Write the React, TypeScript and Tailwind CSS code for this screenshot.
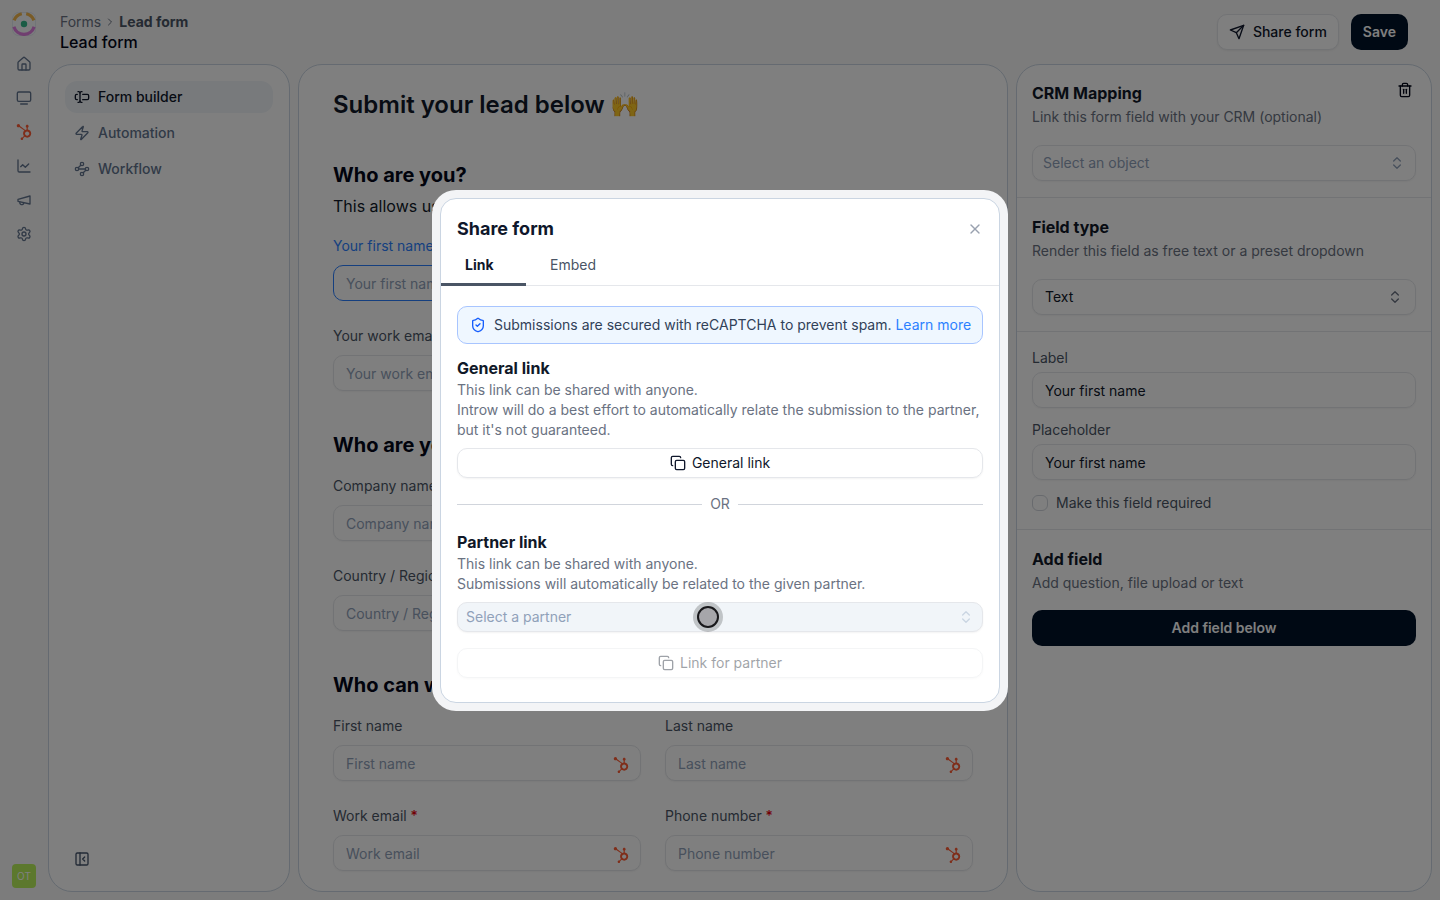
import type { ReactNode } from 'react';
import {
  ChartLine,
  ChevronRight,
  ChevronsUpDown,
  Copy,
  House,
  PanelLeftClose,
  Settings,
  ShieldCheck,
  TextCursorInput,
  Trash2,
  TvMinimal,
  Waypoints,
  X,
  Zap,
} from 'lucide-react';
import { FaHubspot } from 'react-icons/fa';

function Logo() {
  return (
    <svg viewBox="0 0 24 24" className="size-6" aria-hidden="true">
      <rect x="0.5" y="0.5" width="23" height="23" rx="6" fill="#f8fafc" stroke="#e2e8f0" />
      <g fill="none" strokeWidth="3.2">
        <path d="M2.1 8.4A10.4 10.4 0 0 1 9.8 1.8" stroke="#f2b64c" />
        <path d="M14.2 1.8a10.4 10.4 0 0 1 7.7 6.6" stroke="#f2b64c" />
        <path d="M1.9 14.8a10.5 10.5 0 0 0 20.2 0" stroke="#e07fe0" />
      </g>
      <circle cx="12" cy="12" r="3.2" fill="#34b98a" />
    </svg>
  );
}

function MegaphoneIcon() {
  return (
    <svg viewBox="0 0 24 24" className="size-4" fill="none" stroke="currentColor" strokeWidth="2" strokeLinecap="round" strokeLinejoin="round" aria-hidden="true">
      <path d="m3 11 18-5v12L3 14v-3z" />
      <path d="M11.6 16.8a3 3 0 1 1-5.8-1.6" />
    </svg>
  );
}

function SendIcon() {
  return (
    <svg viewBox="0 0 24 24" className="size-4" fill="none" stroke="currentColor" strokeWidth="2" strokeLinecap="round" strokeLinejoin="round" aria-hidden="true">
      <path d="m22 2-7 20-4-9-9-4Z" />
      <path d="M22 2 11 13" />
    </svg>
  );
}

const rail: { label: string; icon: ReactNode }[] = [
  { label: 'Home', icon: <House className="size-4" /> },
  { label: 'Portal', icon: <TvMinimal className="size-4" /> },
  { label: 'HubSpot', icon: <FaHubspot className="size-4 text-[#ff5c35]" /> },
  { label: 'Reports', icon: <ChartLine className="size-4" /> },
  { label: 'Announcements', icon: <MegaphoneIcon /> },
  { label: 'Settings', icon: <Settings className="size-4" /> },
];

function Rail() {
  return (
    <nav aria-label="Main" className="flex w-12 shrink-0 flex-col items-center py-3 text-slate-500">
      <Logo />
      <div className="mt-5 flex flex-col gap-[18px]">
        {rail.map((item) => (
          <a key={item.label} href="#" aria-label={item.label}>
            {item.icon}
          </a>
        ))}
      </div>
      <button type="button" className="mt-auto size-6 rounded bg-[#b8f15a] text-[10px] text-white">
        OT
      </button>
    </nav>
  );
}

function NavItem({ icon, label, active = false }: { icon: ReactNode; label: string; active?: boolean }) {
  return (
    <a
      href="#"
      className={
        active
          ? 'flex h-8 items-center gap-2 rounded-xl border border-transparent bg-slate-100 px-2 font-medium text-slate-900'
          : 'flex h-8 items-center gap-2 rounded-xl border border-transparent px-2 font-medium text-slate-500'
      }
    >
      {icon}
      {label}
    </a>
  );
}

interface FieldProps {
  id: string;
  label: string;
  required?: boolean;
  active?: boolean;
  linked?: boolean;
}

function PreviewField({ id, label, required, active, linked }: FieldProps) {
  return (
    <div className="flex flex-col gap-2">
      <label htmlFor={id} className={active ? 'leading-[22px] text-blue-500' : 'leading-[22px] text-gray-600'}>
        {label}
        {required && <span className="font-medium text-red-600"> *</span>}
      </label>
      <div className="relative">
        <input
          id={id}
          placeholder={label}
          className={
            active
              ? 'block h-9 w-full rounded-[10px] border border-blue-500 bg-white px-3 placeholder:text-slate-400'
              : 'block h-9 w-full rounded-[10px] border border-gray-200 bg-white px-3 shadow-xs placeholder:text-slate-400'
          }
        />
        {linked && <FaHubspot className="absolute top-3 right-3 size-4 text-[#ff5c35]" />}
      </div>
    </div>
  );
}

function Preview() {
  return (
    <main className="min-w-0 flex-1 overflow-hidden rounded-3xl border border-slate-300 bg-white">
      <div className="mx-auto flex max-w-[640px] flex-col gap-10 pt-6">
        <h1 className="text-2xl leading-8 font-semibold text-gray-900">Submit your lead below 🙌</h1>
        <section>
          <h2 className="text-xl font-bold">Who are you?</h2>
          <p className="mt-1 text-base leading-[26px] text-gray-900">This allows us to get in touch with you</p>
          <div className="mt-4 flex flex-col gap-6">
            <PreviewField id="your-first-name" label="Your first name" active />
            <PreviewField id="your-work-email" label="Your work email" />
          </div>
        </section>
        <section>
          <h2 className="text-xl font-bold">Who are you referring?</h2>
          <div className="mt-4 flex flex-col gap-6">
            <PreviewField id="company-name" label="Company name" linked />
            <PreviewField id="country" label="Country / Region" linked />
          </div>
        </section>
        <section>
          <h2 className="text-xl font-bold">Who can we contact?</h2>
          <div className="mt-4 grid grid-cols-2 gap-6">
            <PreviewField id="first-name" label="First name" linked />
            <PreviewField id="last-name" label="Last name" linked />
            <PreviewField id="work-email" label="Work email" required linked />
            <PreviewField id="phone-number" label="Phone number" required linked />
          </div>
        </section>
      </div>
    </main>
  );
}

function Inspector() {
  return (
    <aside className="w-[416px] shrink-0 overflow-hidden rounded-3xl border border-slate-300 bg-white">
      <section className="px-[15px] py-4">
        <div className="flex items-start justify-between">
          <h2 className="text-base font-bold text-gray-900">CRM Mapping</h2>
          <button type="button" aria-label="Delete field" className="mr-[3px] pt-px">
            <Trash2 className="size-4" />
          </button>
        </div>
        <p className="leading-6 text-gray-500">Link this form field with your CRM (optional)</p>
        <div className="relative mt-4">
          <select aria-label="CRM object" className="block h-9 w-full appearance-none rounded-[10px] border border-gray-200 bg-white px-2.5 text-slate-400 shadow-xs">
            <option>Select an object</option>
          </select>
          <ChevronsUpDown className="pointer-events-none absolute top-2.5 right-[11px] size-4 text-slate-400" />
        </div>
      </section>
      <section className="border-t border-gray-200 px-[15px] pt-[17px] pb-4">
        <h2 className="text-base font-bold text-gray-900">Field type</h2>
        <p className="leading-6 text-gray-500">Render this field as free text or a preset dropdown</p>
        <div className="relative mt-4">
          <select aria-label="Field type" className="block h-9 w-full appearance-none rounded-[10px] border border-gray-200 bg-white px-3 text-gray-900 shadow-xs">
            <option>Text</option>
          </select>
          <ChevronsUpDown className="pointer-events-none absolute top-2.5 right-[13px] size-4 text-gray-500" />
        </div>
      </section>
      <section className="flex flex-col gap-3 border-t border-gray-200 px-[15px] pt-4 pb-[15px] text-gray-600">
        <div className="flex flex-col gap-1">
          <label htmlFor="field-label">Label</label>
          <input id="field-label" defaultValue="Your first name" className="h-9 rounded-[10px] border border-gray-200 px-3 text-slate-900 shadow-xs" />
        </div>
        <div className="flex flex-col gap-1">
          <label htmlFor="field-placeholder">Placeholder</label>
          <input id="field-placeholder" defaultValue="Your first name" className="h-9 rounded-[10px] border border-gray-200 px-3 text-slate-900 shadow-xs" />
        </div>
        <label className="flex h-[22px] items-center gap-2">
          <input type="checkbox" className="size-4 appearance-none rounded-md border border-gray-300" />
          Make this field required
        </label>
      </section>
      <section className="border-t border-gray-200 px-[15px] pt-[17px]">
        <h2 className="text-base font-bold text-gray-900">Add field</h2>
        <p className="leading-6 text-gray-500">Add question, file upload or text</p>
        <button type="button" className="mt-[15px] h-9 w-full rounded-[10px] bg-[#001229] font-semibold text-white">
          Add field below
        </button>
      </section>
    </aside>
  );
}

function ShareDialog() {
  return (
    <div className="fixed inset-0 grid place-items-center bg-black/50 pt-px">
      <div role="dialog" aria-modal="true" aria-labelledby="share-title" className="w-[576px] rounded-3xl bg-gray-100 p-2">
        <div className="rounded-2xl border border-slate-300 bg-white">
          <div className="flex items-center justify-between px-4 pt-4">
            <h2 id="share-title" className="text-lg font-bold text-slate-900">
              Share form
            </h2>
            <button type="button" aria-label="Close" className="text-gray-400">
              <X className="size-4" />
            </button>
          </div>
          <div role="tablist" className="mt-3 flex border-b border-gray-200">
            <button type="button" role="tab" aria-selected="true" className="-mb-px w-[85px] border-b-[3px] border-gray-600 pb-2 pl-6 text-left font-bold text-slate-900">
              Link
            </button>
            <button type="button" role="tab" aria-selected="false" className="-mb-px border-b-[3px] border-transparent px-6 pb-2 text-gray-600">
              Embed
            </button>
          </div>
          <div className="px-4 pt-5 pb-6">
            <div className="flex h-[38px] items-center gap-2 rounded-[10px] border border-[#a8c5ff] bg-[#eff7ff] px-3 text-slate-700">
              <ShieldCheck className="size-4 shrink-0 text-blue-600" />
              <p className="whitespace-nowrap">
                Submissions are secured with reCAPTCHA to prevent spam.{' '}
                <a href="#" className="text-blue-500">
                  Learn more
                </a>
              </p>
            </div>
            <h3 className="mt-3 text-base font-bold text-gray-900">General link</h3>
            <p className="text-gray-500">
              This link can be shared with anyone.
              <br />
              Introw will do a best effort to automatically relate the submission to the partner, but it's not guaranteed.
            </p>
            <button type="button" className="mt-2 flex h-[30px] w-full items-center justify-center gap-1.5 rounded-[10px] border border-gray-200 text-slate-900 shadow-xs">
              <Copy className="size-4" />
              General link
            </button>
            <div className="my-4 flex items-center gap-2 text-gray-500">
              <span className="h-px flex-1 bg-gray-300" />
              OR
              <span className="h-px flex-1 bg-gray-300" />
            </div>
            <h3 className="text-base font-bold text-gray-900">Partner link</h3>
            <p className="text-gray-500">
              This link can be shared with anyone.
              <br />
              Submissions will automatically be related to the given partner.
            </p>
            <div className="relative mt-2">
              <select aria-label="Partner" className="block h-[30px] w-full appearance-none rounded-[10px] border border-gray-200 bg-slate-100 px-2 text-slate-400 shadow-xs">
                <option>Select a partner</option>
              </select>
              <ChevronsUpDown className="pointer-events-none absolute top-[7px] right-[9px] size-4 text-slate-300" />
              <svg viewBox="0 0 30 30" className="pointer-events-none absolute top-0 left-[236px] size-[30px]" aria-hidden="true">
                <circle cx="15" cy="15" r="15" fill="#000000" fillOpacity="0.2" />
                <circle cx="15" cy="15" r="10" fill="#a6a6aa" stroke="#18181b" strokeWidth="2" />
              </svg>
            </div>
            <button type="button" disabled className="mt-4 flex h-[30px] w-full items-center justify-center gap-1.5 rounded-[10px] border border-gray-200 text-gray-900 opacity-40 shadow-xs">
              <Copy className="size-4" />
              Link for partner
            </button>
          </div>
        </div>
      </div>
    </div>
  );
}

export default function App() {
  return (
    <div className="flex h-screen bg-[#f8f8f8] font-['Inter','Noto_Color_Emoji',sans-serif] text-sm text-slate-950">
      <Rail />
      <div className="flex min-w-0 flex-1 flex-col pr-2 pb-2">
        <header className="flex h-16 shrink-0 items-center justify-between pr-6 pl-3">
          <div className="pb-px">
            <nav aria-label="Breadcrumb" className="flex items-center gap-[3px] text-gray-500">
              <a href="#">Forms</a>
              <ChevronRight className="size-3" />
              <span className="font-bold text-gray-600">Lead form</span>
            </nav>
            <p className="text-base leading-5 font-medium">Lead form</p>
          </div>
          <div className="flex gap-3">
            <button type="button" className="flex h-9 items-center gap-2 rounded-[10px] border border-gray-200 bg-white px-[11px] font-medium text-slate-900 shadow-xs">
              <SendIcon />
              Share form
            </button>
            <button type="button" className="h-9 rounded-[10px] bg-[#001229] px-3 font-semibold text-white">
              Save
            </button>
          </div>
        </header>
        <div className="flex min-h-0 flex-1 gap-2">
          <aside className="flex w-[242px] shrink-0 flex-col justify-between rounded-3xl border border-slate-300 bg-white p-4">
            <nav aria-label="Form" className="flex flex-col gap-1">
              <NavItem active icon={<TextCursorInput className="size-4" />} label="Form builder" />
              <NavItem icon={<Zap className="size-4" />} label="Automation" />
              <NavItem icon={<Waypoints className="size-4" />} label="Workflow" />
            </nav>
            <button type="button" aria-label="Collapse panel" className="flex h-8 items-center self-start border border-transparent px-2 text-slate-600">
              <PanelLeftClose className="size-4" />
            </button>
          </aside>
          <Preview />
          <Inspector />
        </div>
      </div>
      <ShareDialog />
    </div>
  );
}
